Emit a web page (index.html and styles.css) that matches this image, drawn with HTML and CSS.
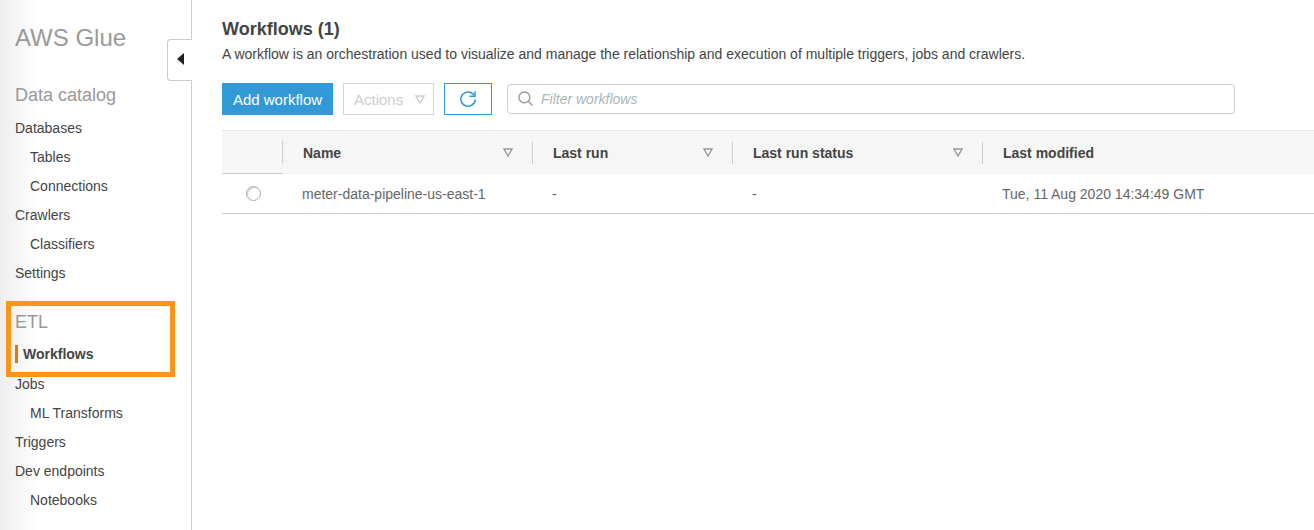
FILE: index.html
```html
<!DOCTYPE html>
<html lang="en">
<head>
    <meta charset="UTF-8">
    <meta name="viewport" content="width=device-width, initial-scale=1.0">
    <title>AWS Glue - Workflows</title>
    <link rel="stylesheet" href="styles.css">
</head>
<body>
    <div class="page">
        <nav class="sidebar">
            <button class="collapse" aria-label="Collapse menu">
                <svg width="7" height="12" viewBox="0 0 7 12"><path d="M7 0v12L0 6z" fill="#222"/></svg>
            </button>
            <h1>AWS Glue</h1>
            <h2>Data catalog</h2>
            <ul>
                <li><a href="#">Databases</a></li>
                <li class="sub"><a href="#">Tables</a></li>
                <li class="sub"><a href="#">Connections</a></li>
                <li><a href="#">Crawlers</a></li>
                <li class="sub"><a href="#">Classifiers</a></li>
                <li><a href="#">Settings</a></li>
            </ul>
            <div class="highlight">
                <h2>ETL</h2>
                <ul>
                    <li><a class="active" href="#">Workflows</a></li>
                </ul>
            </div>
            <ul>
                <li><a href="#">Jobs</a></li>
                <li class="sub"><a href="#">ML Transforms</a></li>
                <li><a href="#">Triggers</a></li>
                <li><a href="#">Dev endpoints</a></li>
                <li class="sub"><a href="#">Notebooks</a></li>
            </ul>
        </nav>

        <main class="content">
            <h3>Workflows (1)</h3>
            <p>A workflow is an orchestration used to visualize and manage the relationship and execution of multiple triggers, jobs and crawlers.</p>

            <div class="toolbar">
                <button class="btn btn-primary">Add workflow</button>
                <button class="btn btn-disabled" disabled>
                    Actions
                    <svg width="10" height="9" viewBox="0 0 10 9"><path d="M.9 1h8.2L5 8z" fill="none" stroke="#ccc" stroke-width="1.4"/></svg>
                </button>
                <button class="btn btn-refresh" aria-label="Refresh">
                    <svg width="18" height="18" viewBox="0 0 18 18" fill="none" stroke="#3199d8" stroke-width="1.5">
                        <path d="M15.2 5.4A7.2 7.2 0 1 0 16.2 9.6"/>
                        <path d="M16 1.2v5h-5.6"/>
                    </svg>
                </button>
                <div class="search">
                    <svg width="16" height="16" viewBox="0 0 16 16" fill="none" stroke="#999" stroke-width="1.4">
                        <circle cx="6.4" cy="6.4" r="5.4"/>
                        <path d="M10.3 10.3l4.2 4.2"/>
                    </svg>
                    <input type="text" placeholder="Filter workflows" aria-label="Filter workflows">
                </div>
            </div>

            <table>
                <colgroup>
                    <col class="col-select">
                    <col class="col-name">
                    <col class="col-run">
                    <col class="col-status">
                    <col>
                </colgroup>
                <thead>
                    <tr>
                        <th class="select"><div class="head"></div></th>
                        <th>
                            <div class="head">Name
                                <svg width="10" height="9" viewBox="0 0 10 9"><path d="M.9 1h8.2L5 8z" fill="none" stroke="#999" stroke-width="1.4"/></svg>
                            </div>
                        </th>
                        <th>
                            <div class="head">Last run
                                <svg width="10" height="9" viewBox="0 0 10 9"><path d="M.9 1h8.2L5 8z" fill="none" stroke="#999" stroke-width="1.4"/></svg>
                            </div>
                        </th>
                        <th>
                            <div class="head">Last run status
                                <svg width="10" height="9" viewBox="0 0 10 9"><path d="M.9 1h8.2L5 8z" fill="none" stroke="#999" stroke-width="1.4"/></svg>
                            </div>
                        </th>
                        <th><div class="head last">Last modified</div></th>
                    </tr>
                </thead>
                <tbody>
                    <tr>
                        <td class="select"><input type="radio" name="workflow" aria-label="Select meter-data-pipeline-us-east-1"></td>
                        <td>meter-data-pipeline-us-east-1</td>
                        <td>-</td>
                        <td>-</td>
                        <td>Tue, 11 Aug 2020 14:34:49 GMT</td>
                    </tr>
                </tbody>
            </table>
        </main>
    </div>
</body>
</html>
```

FILE: styles.css
```css
* {
    box-sizing: border-box;
}
body {
    margin: 0;
    font-family: "Liberation Sans", Arial, sans-serif;
    font-size: 14px;
    color: #444;
    background-color: #fff;
}
.page {
    display: flex;
    min-height: 100vh;
}

/* left menu */
.sidebar {
    position: relative;
    flex: none;
    width: 192px;
    padding: 20px 15px 0;
    border-right: 1px solid #ccc;
    background: linear-gradient(to right, #eee, #fff 40px);
}
.sidebar h1 {
    margin: 0 0 21px;
    font-size: 24px;
    line-height: 36px;
    font-weight: normal;
    color: #999;
}
.sidebar h2 {
    margin: 0;
    padding-top: 4px;
    font-size: 18px;
    line-height: 28px;
    font-weight: normal;
    color: #999;
}
.sidebar ul {
    margin: 0;
    padding: 5px 0 0;
    list-style: none;
}
.sidebar li {
    line-height: 29px;
}
.sidebar .sub {
    padding-left: 15px;
}
.sidebar a {
    color: #444;
    text-decoration: none;
}
.sidebar a.active {
    padding: 1px 0 1px 5px;
    border-left: 3px solid #dd7711;
    font-weight: bold;
}
.highlight {
    margin: 13px -9px 0 -9px;
    width: 169px;
    height: 76px;
    padding: 2px 4px 0;
    border: 5px solid #ff9518;
}
.highlight h2 {
    padding-top: 0;
}
.highlight ul {
    padding-top: 4px;
}
.highlight + ul {
    margin-top: -7px;
    padding-top: 0;
}
.collapse {
    position: absolute;
    top: 39px;
    right: -1px;
    width: 25px;
    height: 42px;
    padding: 0 0 0 9px;
    border: 1px solid #ccc;
    border-right: none;
    border-radius: 4px 0 0 4px;
    background-color: #fff;
    text-align: left;
    cursor: pointer;
}

/* main area */
.content {
    flex: 1;
    min-width: 0;
    padding: 18px 0 0 30px;
}
.content h3 {
    margin: 0;
    font-size: 18px;
    line-height: 22px;
}
.content p {
    margin: 4px 0 19px;
    line-height: 20px;
}
.toolbar {
    display: flex;
    align-items: center;
    gap: 10px;
    margin-right: 79px;
    margin-bottom: 15px;
}
.btn {
    display: flex;
    align-items: center;
    justify-content: center;
    height: 32px;
    padding: 0 10px;
    border: 1px solid #3199d8;
    border-radius: 0;
    background-color: #fff;
    font-family: inherit;
    font-size: 15px;
    white-space: nowrap;
    cursor: pointer;
}
.btn-primary {
    width: 111px;
    background-color: #3199d8;
    color: #fff;
}
.btn-disabled {
    width: 91px;
    justify-content: space-between;
    padding-right: 8px;
    border-color: #d5d5d5;
    color: #ccc;
    cursor: default;
}
.btn-refresh {
    width: 48px;
    padding: 0;
}
.search {
    display: flex;
    flex: 1;
    align-items: center;
    gap: 7px;
    height: 30px;
    margin-left: 5px;
    padding: 0 10px;
    border: 1px solid #ccc;
    border-radius: 4px;
}
.search input {
    flex: 1;
    min-width: 0;
    padding: 0;
    border: none;
    outline: none;
    font-family: inherit;
    font-size: 14px;
    font-style: italic;
}
.search input::placeholder {
    color: #aab7b8;
}

table {
    width: 100%;
    table-layout: fixed;
    border-collapse: separate;
    border-spacing: 0;
}
.col-select {
    width: 61px;
}
.col-name,
.col-status {
    width: 250px;
}
.col-run {
    width: 200px;
}
th {
    height: 44px;
    padding: 0;
    border-top: 1px solid #eaeaea;
    background-color: #f6f6f6;
    text-align: left;
}
th.select {
    border-bottom: 1px solid #ccc;
}
.head {
    display: flex;
    align-items: center;
    justify-content: space-between;
    height: 22px;
    padding: 0 19px 0 20px;
    border-right: 1px solid #ccc;
    line-height: 14px;
}
.head.last {
    border-right: none;
}
td {
    height: 40px;
    padding: 0 19px;
    border-bottom: 1px solid #ccc;
    color: #666;
}
td.select {
    padding: 0 0 0 2px;
    line-height: 14px;
    text-align: center;
}
td input {
    appearance: none;
    width: 15px;
    height: 15px;
    margin: 0;
    border: 1px solid #aaa;
    border-radius: 50%;
    box-shadow: inset 1px 1px 1px #ccc;
    vertical-align: middle;
}
td input:checked {
    background-color: #3199d8;
}
```
